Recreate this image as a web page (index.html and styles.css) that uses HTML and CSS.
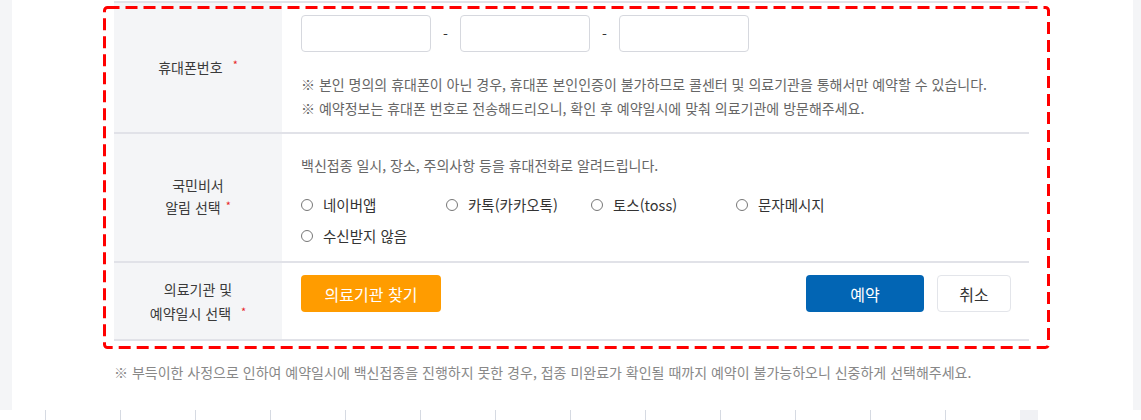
FILE: index.html
```html
<!DOCTYPE html>
<html lang="ko">
<head>
    <meta charset="UTF-8">
    <title>예약 정보 입력</title>
    <link rel="stylesheet" href="styles.css">
</head>
<body>

    <div class="wrap">
        <div class="gutter"></div>
        <div class="main">
            <div class="form_table">
                <!-- 휴대폰번호 -->
                <div class="row">
                    <div class="th">휴대폰번호<span class="req wide">*</span></div>
                    <div class="td td_phone">
                        <div class="phone">
                            <input type="text" class="phone_input">
                            <span class="dash">-</span>
                            <input type="text" class="phone_input">
                            <span class="dash">-</span>
                            <input type="text" class="phone_input">
                        </div>
                        <p class="note">※ 본인 명의의 휴대폰이 아닌 경우, 휴대폰 본인인증이 불가하므로 콜센터 및 의료기관을 통해서만 예약할 수 있습니다.</p>
                        <p class="note">※ 예약정보는 휴대폰 번호로 전송해드리오니, 확인 후 예약일시에 맞춰 의료기관에 방문해주세요.</p>
                    </div>
                </div>
                <!-- 국민비서 알림 -->
                <div class="row">
                    <div class="th th_two">국민비서<br>알림 선택<span class="req">*</span></div>
                    <div class="td td_alarm">
                        <p class="note">백신접종 일시, 장소, 주의사항 등을 휴대전화로 알려드립니다.</p>
                        <div class="radio_list">
                            <label class="radio"><span class="circle"></span>네이버앱</label>
                            <label class="radio"><span class="circle"></span>카톡(카카오톡)</label>
                            <label class="radio"><span class="circle"></span>토스(toss)</label>
                            <label class="radio"><span class="circle"></span>문자메시지</label>
                            <label class="radio"><span class="circle"></span>수신받지 않음</label>
                        </div>
                    </div>
                </div>
                <!-- 의료기관 -->
                <div class="row row_last">
                    <div class="th th_two">의료기관 및<br>예약일시 선택<span class="req wide">*</span></div>
                    <div class="td td_btns">
                        <button class="btn btn_orange">의료기관 찾기</button>
                        <button class="btn btn_blue">예약</button>
                        <button class="btn btn_white">취소</button>
                    </div>
                </div>
            </div>
            <p class="bottom_note">※ 부득이한 사정으로 인하여 예약일시에 백신접종을 진행하지 못한 경우, 접종 미완료가 확인될 때까지 예약이 불가능하오니 신중하게 선택해주세요.</p>
        </div>
        <div class="gutter gutter_right"></div>
        <!-- 강조 표시 -->
        <svg class="highlight" width="947" height="343" viewBox="0 0 947 343">
            <rect x="1.5" y="1.5" width="944" height="340" rx="3" fill="none" stroke="#ff0000" stroke-width="3" stroke-dasharray="12 6"/>
        </svg>
    </div>

    <div class="tabs">
        <span class="tab"></span><span class="tab"></span><span class="tab"></span>
        <span class="tab"></span><span class="tab"></span><span class="tab"></span>
        <span class="tab"></span><span class="tab"></span><span class="tab"></span>
        <span class="tab"></span><span class="tab"></span><span class="tab"></span>
        <span class="tab"></span>
        <span class="tab_end"></span>
    </div>

</body>
</html>
```

FILE: styles.css
```css
* {
    box-sizing: border-box;
}
body {
    margin: 0;
    background: #fff;
    font-family: "Noto Sans CJK KR", "Noto Sans", sans-serif;
    color: #333;
    overflow: hidden;
}
.wrap {
    position: relative;
    display: flex;
    height: 410px;
}
.gutter {
    width: 12px;
    background: #f4f5f7;
}
.gutter_right {
    width: 8px;
}
.main {
    flex: 1;
    padding: 1px 0 0 102px;
}
.form_table {
    width: 915px;
    border-top: 2px solid #e1e2e8;
}
.row {
    display: flex;
    border-bottom: 2px solid #e1e2e8;
}
.th {
    width: 168px;
    flex: none;
    background: #f4f5f7;
    display: flex;
    align-items: center;
    justify-content: center;
    text-align: center;
    font-size: 14px;
    line-height: 23px;
    color: #3a3a3a;
}
.th_two {
    display: block;
}
.row:nth-child(2) .th {
    padding-top: 40px;
    line-height: 22px;
}
.row_last .th {
    padding-top: 14px;
    line-height: 24px;
}
.req {
    color: #e8242a;
    font-size: 11px;
    margin-left: 5px;
    position: relative;
    top: -3px;
}
.req.wide {
    margin-left: 10px;
}
.td {
    flex: 1;
    padding-left: 19px;
}
.td_phone {
    padding-top: 12px;
    padding-bottom: 12px;
}
.phone {
    display: flex;
    align-items: center;
    margin-bottom: 20px;
}
.phone_input {
    width: 130px;
    height: 37px;
    border: 1px solid #d6d8de;
    border-radius: 4px;
    background: #fff;
    margin: 0;
}
.dash {
    width: 29px;
    text-align: center;
    font-size: 14px;
    color: #333;
}
.note {
    margin: 0;
    font-size: 14px;
    line-height: 24px;
    color: #666;
}
.td_alarm {
    padding-top: 19px;
    padding-bottom: 10px;
}
.radio_list {
    display: grid;
    grid-template-columns: repeat(4, 145px);
    grid-auto-rows: 31px;
    margin-top: 12px;
}
.radio {
    display: flex;
    align-items: center;
    font-size: 14.5px;
    color: #333;
}
.circle {
    width: 12px;
    height: 12px;
    border: 1px solid #777;
    border-radius: 50%;
    margin-right: 10px;
}
.td_btns {
    display: flex;
    align-items: flex-start;
    padding-top: 12px;
    padding-bottom: 27px;
    padding-right: 18px;
}
.btn {
    height: 37px;
    border-radius: 4px;
    border: none;
    font-family: inherit;
    font-size: 16px;
    padding: 0;
    margin: 0;
}
.btn_orange {
    width: 140px;
    background: #ff9c00;
    color: #fff;
}
.btn_blue {
    width: 118px;
    margin-left: auto;
    background: #0265b4;
    color: #fff;
}
.btn_white {
    width: 74px;
    margin-left: 13px;
    background: #fff;
    border: 1px solid #e3e5ea;
    color: #333;
}
.bottom_note {
    margin: 19px 0 0;
    font-size: 14px;
    line-height: 24px;
    color: #888;
}
.highlight {
    position: absolute;
    left: 103px;
    top: 6px;
    pointer-events: none;
}
.tabs {
    display: flex;
    height: 10px;
    padding-left: 45px;
}
.tab {
    width: 75px;
    border-left: 1px solid #d6dae2;
}
.tab_end {
    width: 18px;
    background: #f0f1f4;
}
```
